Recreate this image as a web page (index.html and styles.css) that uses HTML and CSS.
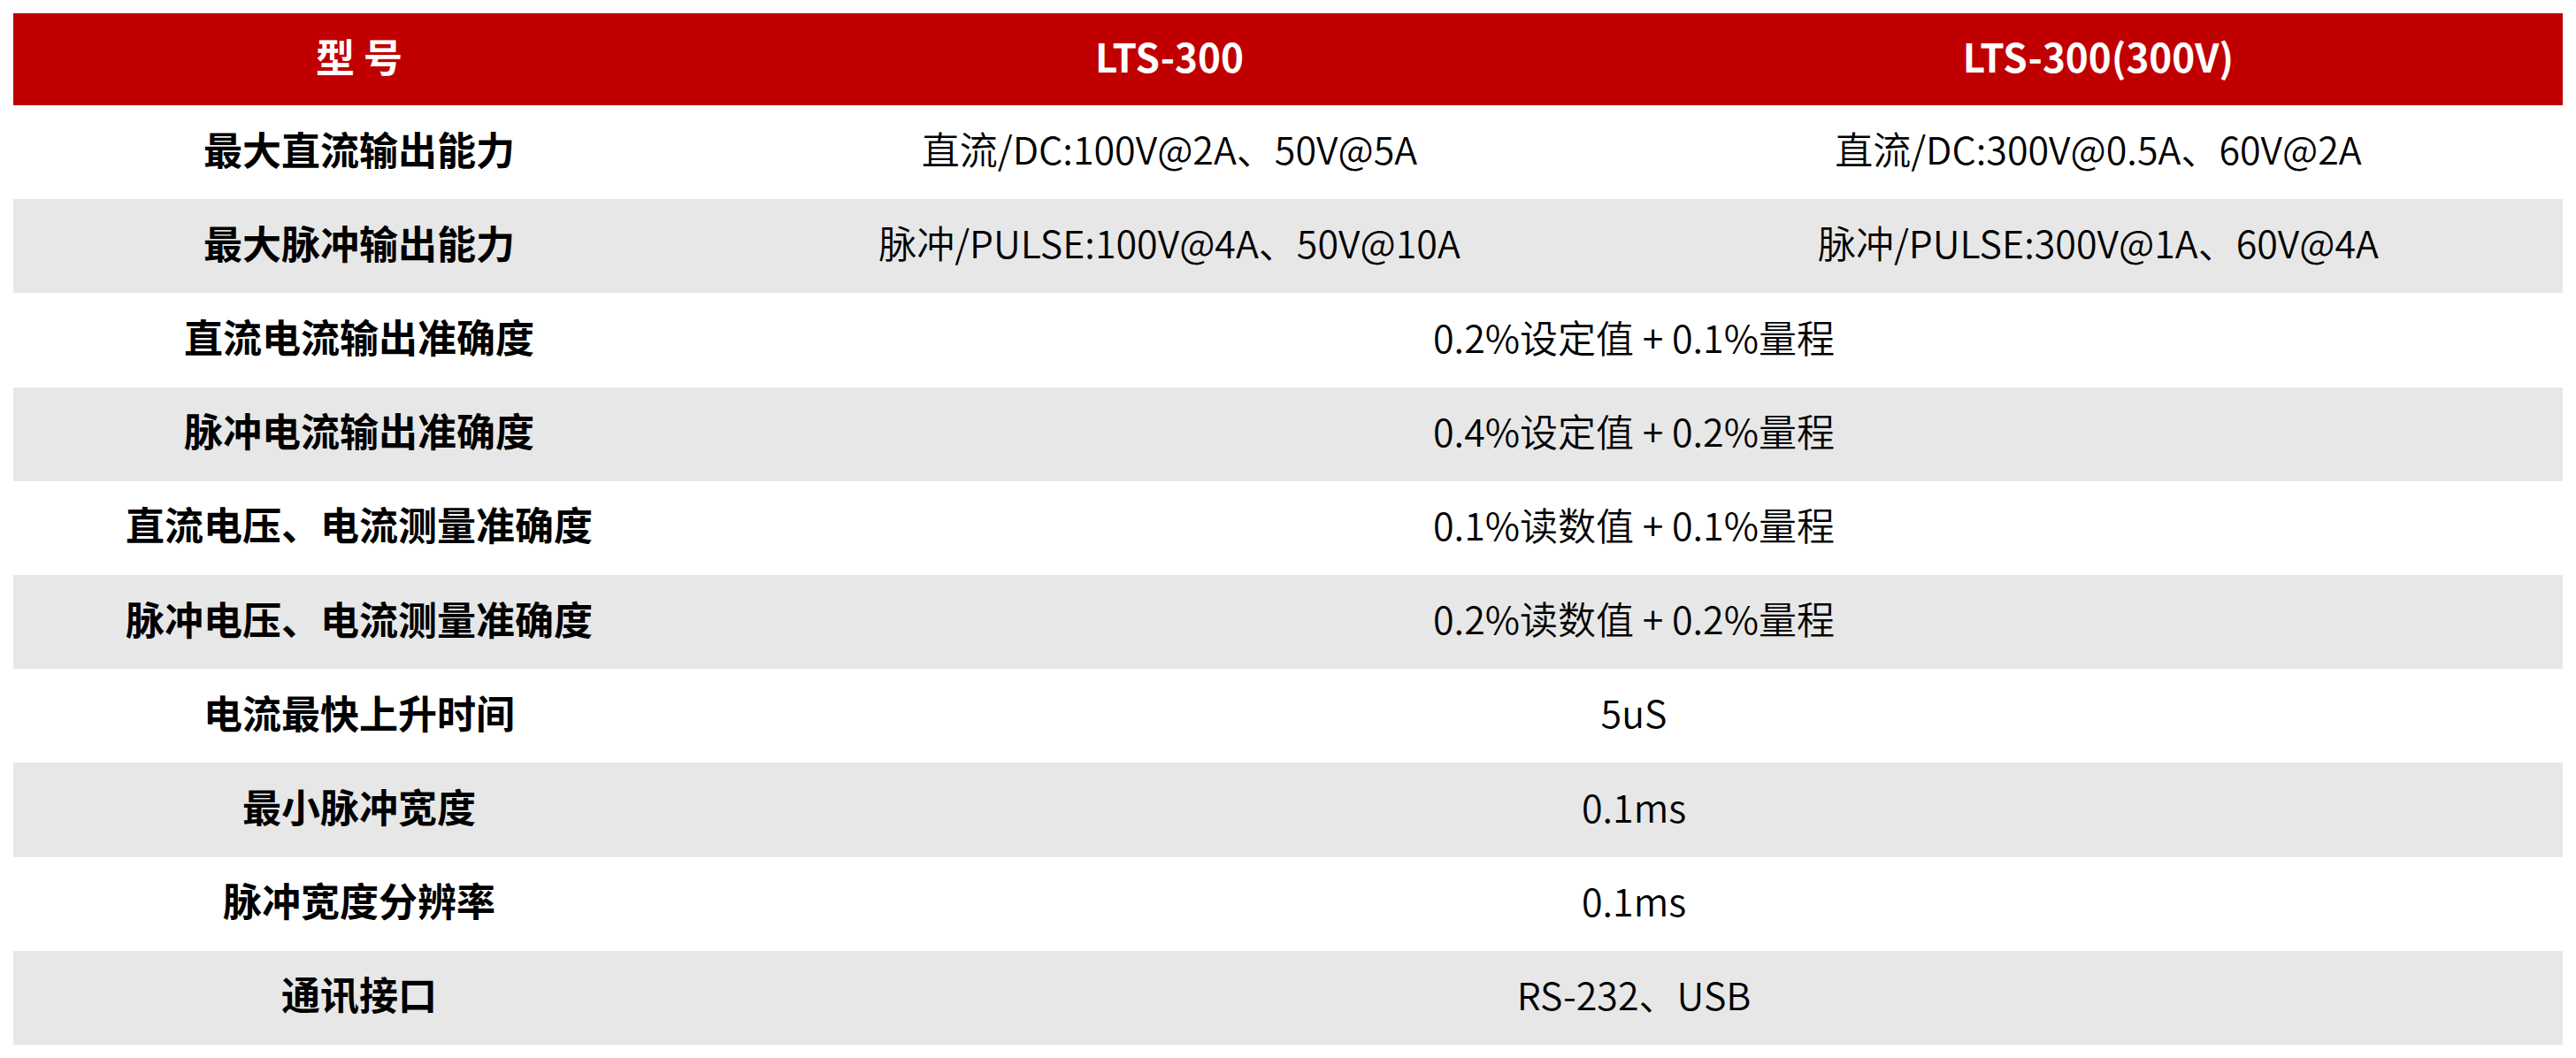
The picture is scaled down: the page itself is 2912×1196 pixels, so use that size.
FILE: index.html
```html
<!DOCTYPE html>
<html lang="zh-CN">
<head>
<meta charset="utf-8">
<title>LTS-300 参数</title>
<link rel="stylesheet" href="styles.css">
</head>
<body>
<table class="spec">
  <colgroup>
    <col class="c-name">
    <col class="c-val">
    <col class="c-val">
  </colgroup>
  <thead>
    <tr class="head">
      <th>型 号</th>
      <th>LTS-300</th>
      <th>LTS-300(300V)</th>
    </tr>
  </thead>
  <tbody>
    <tr>
      <td class="name">最大直流输出能力</td>
      <td>直流/DC:100V@2A、50V@5A</td>
      <td>直流/DC:300V@0.5A、60V@2A</td>
    </tr>
    <tr class="alt">
      <td class="name">最大脉冲输出能力</td>
      <td>脉冲/PULSE:100V@4A、50V@10A</td>
      <td>脉冲/PULSE:300V@1A、60V@4A</td>
    </tr>
    <tr>
      <td class="name">直流电流输出准确度</td>
      <td colspan="2">0.2%设定值 + 0.1%量程</td>
    </tr>
    <tr class="alt">
      <td class="name">脉冲电流输出准确度</td>
      <td colspan="2">0.4%设定值 + 0.2%量程</td>
    </tr>
    <tr>
      <td class="name">直流电压、电流测量准确度</td>
      <td colspan="2">0.1%读数值 + 0.1%量程</td>
    </tr>
    <tr class="alt">
      <td class="name">脉冲电压、电流测量准确度</td>
      <td colspan="2">0.2%读数值 + 0.2%量程</td>
    </tr>
    <tr>
      <td class="name">电流最快上升时间</td>
      <td colspan="2">5uS</td>
    </tr>
    <tr class="alt">
      <td class="name">最小脉冲宽度</td>
      <td colspan="2">0.1ms</td>
    </tr>
    <tr>
      <td class="name">脉冲宽度分辨率</td>
      <td colspan="2">0.1ms</td>
    </tr>
    <tr class="alt">
      <td class="name">通讯接口</td>
      <td colspan="2">RS-232、USB</td>
    </tr>
  </tbody>
</table>
</body>
</html>
```
FILE: styles.css
```css
html, body {
  background: #ffffff;
}
body {
  margin: 15px;
  font-family: "Noto Sans CJK SC", "Noto Sans", sans-serif;
  color: #000000;
}
.spec {
  width: 2882px;
  border-collapse: collapse;
  border-spacing: 0;
  table-layout: fixed;
}
.c-name {
  width: 782px;
}
.c-val {
  width: 1050px;
}
.spec th,
.spec td {
  padding: 0 0 8px 0;
  text-align: center;
  vertical-align: middle;
  font-size: 43px;
  line-height: 1.2;
}
.head {
  height: 104px;
}
.head th {
  background: #c00000;
  color: #ffffff;
  font-size: 44px;
  font-weight: 700;
}
.spec tbody tr {
  height: 106.2px;
}
.spec tbody td {
  font-weight: 350;
}
.spec tbody td.name {
  font-size: 44px;
  font-weight: 700;
}
.alt td {
  background: #e7e7e7;
}
```
